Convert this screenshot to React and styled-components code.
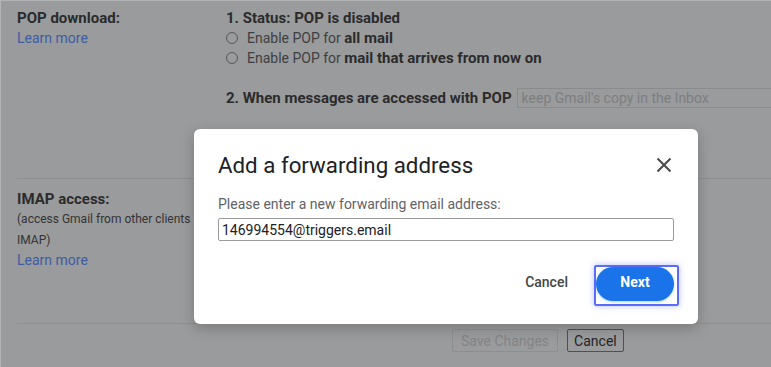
import React from "react";
import styled, { createGlobalStyle } from "styled-components";

const GlobalStyle = createGlobalStyle`
  html, body {
    margin: 0;
    padding: 0;
    background: #9a9b9d;
    font-family: Roboto, "Liberation Sans", Arial, sans-serif;
  }
  * {
    box-sizing: border-box;
  }
`;

// dimmed settings page behind the dialog
const Page = styled.div`
  position: relative;
  width: 771px;
  height: 367px;
  overflow: hidden;
  background: #9a9b9d;
  border-top: 1px solid #b3b4b6;
  border-left: 1px solid #b3b4b6;
  padding: 7px 0 0 16px;
  color: #2b2b2c;
  font-size: 14px;
`;

const Section = styled.div`
  display: grid;
  grid-template-columns: 209px 1fr;
  height: ${(p) => p.h}px;
  padding-top: ${(p) => p.pt || 0}px;
  border-bottom: 1px solid #8e8f91;
`;

const LabelCol = styled.div`
  display: flex;
  flex-direction: column;
`;

const Label = styled.div`
  font-size: 15px;
  font-weight: 700;
  line-height: 20px;
`;

const Note = styled.div`
  font-size: 12px;
  line-height: 20.5px;
  color: #333335;
  margin-right: -30px;
`;

const Link = styled.a`
  color: #3d5ca3;
  line-height: 20px;
  text-decoration: none;
  cursor: pointer;
`;

const Content = styled.div`
  display: flex;
  flex-direction: column;
`;

const Line = styled.div`
  display: flex;
  align-items: center;
  height: 20px;
  white-space: nowrap;
  margin-top: ${(p) => p.mt || 0}px;
  font-size: ${(p) => (p.bold ? 15 : 14)}px;
  font-weight: ${(p) => (p.bold ? 700 : 400)};
`;

const Strong = styled.b`
  font-size: 15px;
  font-weight: 700;
`;

const Radio = styled.span`
  width: 12px;
  height: 12px;
  border-radius: 50%;
  border: 1px solid #565759;
  margin-right: 9px;
  flex: none;
`;

const Faint = styled.span`
  color: #3e3f41;
`;

const Select = styled.div`
  margin-left: 5px;
  width: 300px;
  height: 20px;
  border: 1px solid #8a8b8d;
  border-right: none;
  padding-left: 4px;
  font-size: 14px;
  font-weight: 400;
  color: #7d7e80;
  line-height: 18px;
`;

const Footer = styled.div`
  display: flex;
  gap: 9px;
  padding: 5px 0 0 435px;
`;

const PageButton = styled.button`
  height: 23px;
  padding: 0 ${(p) => p.px}px;
  font-family: inherit;
  font-size: 14px;
  border-radius: 2px;
  background: #9a9b9d;
  border: 1px solid ${(p) => (p.disabled ? "#8d8e90" : "#4f5052")};
  color: ${(p) => (p.disabled ? "#838486" : "#242426")};
`;

// the modal
const Dialog = styled.div`
  position: absolute;
  left: 193px;
  top: 128px;
  width: 504px;
  height: 195px;
  background: #fff;
  border-radius: 6px;
  box-shadow: 0 4px 14px rgba(0, 0, 0, 0.22);
  padding: 22px 24px 0 24px;
  display: flex;
  flex-direction: column;
`;

const DialogHead = styled.div`
  display: flex;
  align-items: center;
  justify-content: space-between;
  height: 28px;
`;

const Title = styled.h2`
  margin: 0;
  font-size: 22.3px;
  font-weight: 400;
  line-height: 28px;
  color: #202124;
`;

const CloseButton = styled.button`
  border: none;
  background: none;
  padding: 0;
  margin-right: 2px;
  display: flex;
  cursor: pointer;
`;

const Prompt = styled.div`
  margin-top: 15px;
  font-size: 14px;
  line-height: 20px;
  color: #5f6368;
`;

const AddressInput = styled.input`
  margin-top: 4px;
  width: 456px;
  height: 23px;
  border: 1px solid #9a9a9a;
  border-radius: 2px;
  padding: 0 3px;
  font-family: inherit;
  font-size: 14px;
  color: #202124;
  outline: none;
`;

const Actions = styled.div`
  margin-top: 24px;
  display: flex;
  justify-content: flex-end;
  align-items: flex-start;
  margin-right: -5px;
`;

const TextButton = styled.button`
  height: 34px;
  border: none;
  background: none;
  padding: 0 12px 4px;
  margin: 2px 14px 0 0;
  font-family: inherit;
  font-size: 14px;
  font-weight: 500;
  color: #444746;
`;

const FocusRing = styled.span`
  display: flex;
  width: 85px;
  height: 41px;
  border: 2px solid #5c6cfa;
  border-radius: 2px;
  box-shadow: 0 0 6px rgba(92, 108, 250, 0.45);
`;

const PrimaryButton = styled.button`
  width: 78px;
  height: 34px;
  border: none;
  border-radius: 17px;
  padding: 0 0 4px;
  background: #1a73e8;
  color: #fff;
  font-family: inherit;
  font-size: 14px;
  font-weight: 700;
  box-shadow: 0 1px 3px rgba(26, 115, 232, 0.35);
`;

const CloseIcon = () => (
  <svg width="16" height="16" viewBox="0 0 16 16">
    <path d="M1.5 1.5 14.5 14.5M14.5 1.5 1.5 14.5" stroke="#48494b" strokeWidth="2" />
  </svg>
);

const App = () => {
  return (
    <>
      <GlobalStyle />
      <Page>
        <Section h={171}>
          <LabelCol>
            <Label>POP download:</Label>
            <Link>Learn more</Link>
          </LabelCol>
          <Content>
            <Line bold>1. Status: POP is disabled</Line>
            <Line>
              <Radio />
              <Faint>Enable POP for&nbsp;</Faint>
              <Strong>all mail</Strong>
            </Line>
            <Line>
              <Radio />
              <Faint>Enable POP for&nbsp;</Faint>
              <Strong>mail that arrives from now on</Strong>
            </Line>
            <Line bold mt={20}>
              2. When messages are accessed with POP
              <Select>keep Gmail's copy in the Inbox</Select>
            </Line>
          </Content>
        </Section>
        <Section h={145} pt={10}>
          <LabelCol>
            <Label>IMAP access:</Label>
            <Note>(access Gmail from other clients using IMAP)</Note>
            <Link>Learn more</Link>
          </LabelCol>
          <Content />
        </Section>
        <Footer>
          <PageButton px={8} disabled>
            Save Changes
          </PageButton>
          <PageButton px={6}>Cancel</PageButton>
        </Footer>

        <Dialog>
          <DialogHead>
            <Title>Add a forwarding address</Title>
            <CloseButton aria-label="Close">
              <CloseIcon />
            </CloseButton>
          </DialogHead>
          <Prompt>Please enter a new forwarding email address:</Prompt>
          <AddressInput readOnly value="146994554@triggers.email" />
          <Actions>
            <TextButton>Cancel</TextButton>
            <FocusRing>
              <PrimaryButton>Next</PrimaryButton>
            </FocusRing>
          </Actions>
        </Dialog>
      </Page>
    </>
  );
};

export default App;
